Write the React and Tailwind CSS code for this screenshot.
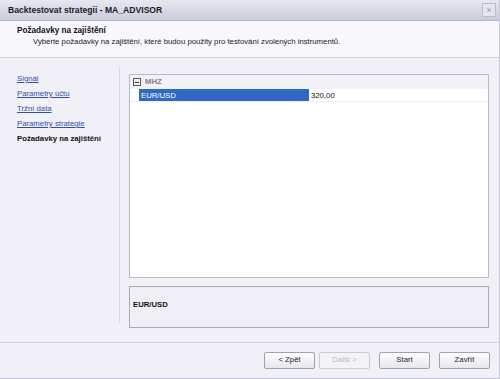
import React from "react";

const font = { fontFamily: '"Liberation Sans", Arial, sans-serif' };

function NavLink({ children, active }) {
  if (active) {
    return <div className="font-bold text-[7.75px] leading-[15px] text-[#111]">{children}</div>;
  }
  return (
    <div className="text-[7.75px] leading-[15px] text-[#3050a8] underline cursor-pointer">{children}</div>
  );
}

function Button({ children, disabled }) {
  return (
    <button
      className={
        "w-[51px] h-[17px] rounded-[2px] border text-[7.75px] leading-none " +
        (disabled
          ? "border-[#c8cad6] bg-[#f4f4f8] text-[#b8bac6]"
          : "border-[#9ea2b6] bg-gradient-to-b from-[#ffffff] to-[#e6e6ee] text-[#222]")
      }
    >
      {children}
    </button>
  );
}

export default function App() {
  return (
    <div
      className="w-[500px] h-[379px] flex flex-col bg-[#f1f0f7] border-r border-b border-[#c4c6d4] overflow-hidden"
      style={font}
    >
      {/* title bar */}
      <div className="h-[21px] shrink-0 flex items-center justify-between pl-[8px] pr-[3px] bg-gradient-to-b from-[#e6e8f1] to-[#c9ccdc] border-b border-[#b4b7c8]">
        <span className="font-bold text-[8.6px] text-[#1a1a22]">Backtestovat strategii - MA_ADVISOR</span>
        <div className="w-[14px] h-[14px] border border-[#b9bccb] bg-[#e4e6ef] flex items-center justify-center text-[9px] text-[#9a9db0] leading-none">
          ×
        </div>
      </div>

      {/* header */}
      <div className="h-[37px] shrink-0 bg-[#f8f8fc] border-b border-[#d2d3de] pl-[17px] pt-[4px]">
        <div className="font-bold text-[8.2px] leading-[11px] text-[#111]">Požadavky na zajištění</div>
        <div className="pl-[16px] text-[7.75px] leading-[11px] text-[#222]">
          Vyberte požadavky na zajištění, které budou použity pro testování zvolených instrumentů.
        </div>
      </div>

      {/* body */}
      <div className="flex-1 flex">
        <div className="w-[120px] shrink-0 pt-[10px] pb-[19px] flex">
          <div className="flex-1 border-r border-[#d6d6e0] pl-[17px] pt-[3px]">
            <NavLink>Signál</NavLink>
            <NavLink>Parametry účtu</NavLink>
            <NavLink>Tržní data</NavLink>
            <NavLink>Parametry strategie</NavLink>
            <NavLink active>Požadavky na zajištění</NavLink>
          </div>
        </div>

        <div className="flex-1 flex flex-col pl-[9px] pr-[10px] pt-[16px] pb-[14px] gap-[8px]">
          <div className="h-[204px] bg-white border border-[#b8bac8]">
            <div className="h-[14px] bg-[#f1f1f7] flex items-center pl-[3px] gap-[4px]">
              <div className="w-[8px] h-[8px] border border-[#555] flex items-center justify-center">
                <div className="w-[4px] h-px bg-[#333]" />
              </div>
              <span className="font-bold text-[7.75px] text-[#808090]">MHZ</span>
            </div>
            <div className="h-[13px] flex border-b border-[#eeeef4]">
              <div className="ml-[9px] w-[170px] bg-[#3168c4] text-white text-[7.75px] leading-[13px] pl-[2px]">
                EUR/USD
              </div>
              <div className="pl-[2px] text-[7.75px] leading-[13px] text-[#111]">320,00</div>
            </div>
          </div>
          <div className="h-[42px] bg-[#f0eff6] border border-[#a9abb8] pl-[3px] pt-[3px]">
            <span className="font-bold text-[7.75px] text-[#111]">EUR/USD</span>
          </div>
        </div>
      </div>

      {/* footer */}
      <div className="h-[37px] shrink-0 border-t border-[#d6d6e0] flex items-center justify-end pr-[9px] pb-[2px]">
        <div className="flex gap-[4px]">
          <Button>&lt; Zpět</Button>
          <Button disabled>Další &gt;</Button>
        </div>
        <div className="flex gap-[9px] ml-[9px]">
          <Button>Start</Button>
          <Button>Zavřít</Button>
        </div>
      </div>
    </div>
  );
}
